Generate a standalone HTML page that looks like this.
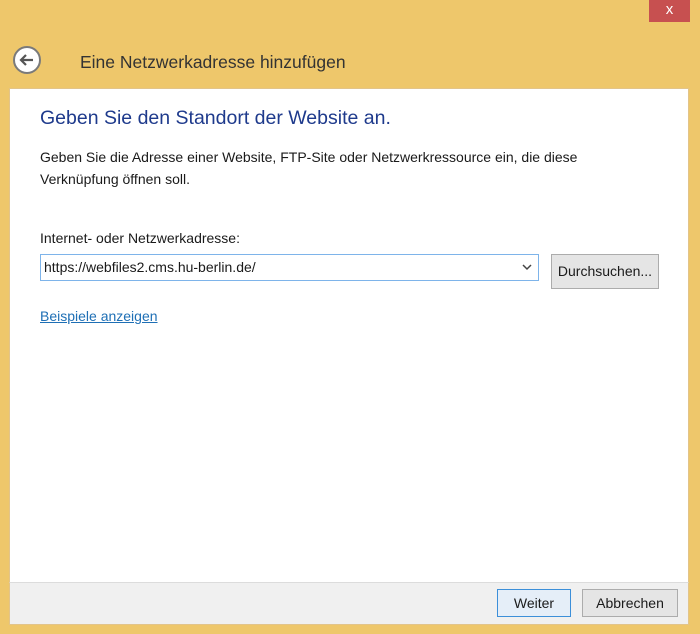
<!DOCTYPE html>
<html><head><style>
*{margin:0;padding:0;box-sizing:border-box}
body{width:700px;height:634px;background:#eec76b;position:relative;font-family:"Liberation Sans",sans-serif;overflow:hidden;color:#1a1a1a}
.abs{position:absolute}
.close{left:649px;top:0;width:41px;height:22px;background:#c75050;color:#fff;font-size:15px;text-align:center;line-height:20px}
.main{left:9px;top:88px;width:680px;height:494px;background:#fff;border:1px solid #e2c48a;border-bottom:none}
.foot{left:9px;top:582px;width:680px;height:43px;background:#f0f0f0;border:1px solid #e2c48a;border-top:1px solid #dcdcdc}
.btn{background:#e5e5e5;border:1px solid #acacac;font-size:14px;text-align:center}
</style></head><body>
<div class="abs close">x</div>
<svg class="abs" style="left:12px;top:45px" width="30" height="30" viewBox="0 0 30 30"><circle cx="15" cy="15" r="13" fill="#fff" stroke="#7a7a7a" stroke-width="2"/><path d="M21 15H9M14 10l-5 5 5 5" fill="none" stroke="#555" stroke-width="2.2"/></svg>
<div class="abs" style="left:80px;top:52px;font-size:17.5px;color:#333">Eine Netzwerkadresse hinzufügen</div>
<div class="abs main"></div>
<div class="abs" style="left:40px;top:107px;font-size:19.5px;color:#1e3a8c">Geben Sie den Standort der Website an.</div>
<div class="abs" style="left:40px;top:146px;font-size:14px;line-height:22px;width:565px">Geben Sie die Adresse einer Website, FTP-Site oder Netzwerkressource ein, die diese Verknüpfung öffnen soll.</div>
<div class="abs" style="left:40px;top:230px;font-size:14px">Internet- oder Netzwerkadresse:</div>
<div class="abs" style="left:40px;top:254px;width:499px;height:27px;border:1px solid #7eb4ea;font-size:14px;line-height:25px;padding-left:3px">https://webfiles2.cms.hu-berlin.de/
<svg class="abs" style="right:6px;top:9px" width="10" height="7"><path d="M1 1l4 4 4-4" fill="none" stroke="#444" stroke-width="1.5"/></svg></div>
<div class="abs btn" style="left:551px;top:254px;width:108px;height:35px;line-height:33px">Durchsuchen...</div>
<div class="abs" style="left:40px;top:308px;font-size:14px;color:#1e6fb5;text-decoration:underline">Beispiele anzeigen</div>
<div class="abs foot"></div>
<div class="abs btn" style="left:497px;top:589px;width:74px;height:28px;line-height:26px;border-color:#3c8fd9;background:#e5eef8">Weiter</div>
<div class="abs btn" style="left:582px;top:589px;width:96px;height:28px;line-height:26px">Abbrechen</div>
</body></html>
